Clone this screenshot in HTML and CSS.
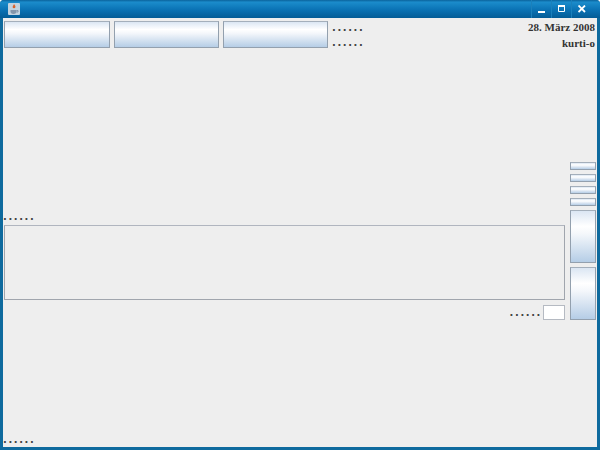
FILE: index.html
```html
<!DOCTYPE html>
<html lang="en">
<head>
    <meta charset="UTF-8">
    <title>Window</title>
    <link rel="stylesheet" href="styles.css">
</head>
<body>
    <div class="window">
        <div class="titlebar">
            <svg class="app-icon" width="12" height="12" viewBox="0 0 12 12">
                <rect width="12" height="12" rx="1" fill="#c3d3e0"/>
                <path d="M6 1c1 1.500 1.800 2 1.300 3.500C7 5.500 5 5.500 4.700 4.500 4.300 3.300 5.600 2.500 6 1z" fill="#d9622a"/>
                <path d="M2.500 7h6v1.500c0 1.500-1 2.500-3 2.500s-3-1-3-2.500z" fill="#8496ab"/>
                <path d="M8.500 7.500h1.500v1.500h-1.500" fill="none" stroke="#8496ab"/>
            </svg>
            <div class="controls">
                <div class="control">
                    <svg width="8" height="8" viewBox="0 0 8 8"><rect y="6" width="7" height="2" fill="#fff"/></svg>
                </div>
                <div class="control">
                    <svg width="8" height="8" viewBox="0 0 8 8"><path d="M.5.500h6v6h-6z" fill="none" stroke="#fff"/><rect width="7" height="2" fill="#fff"/></svg>
                </div>
                <div class="control">
                    <svg width="8" height="8" viewBox="0 0 8 8"><path d="M.5.500l6.500 6.500M7 .500l-6.500 6.500" stroke="#fff" stroke-width="1.800"/></svg>
                </div>
            </div>
        </div>

        <div class="content">
            <div class="top-row">
                <button class="btn btn-top btn-first"></button>
                <button class="btn btn-top"></button>
                <button class="btn btn-top"></button>
                <div class="top-labels">
                    <span class="dots">......</span>
                    <span class="dots">......</span>
                </div>
                <div class="info">
                    <span>28. März 2008</span>
                    <span>kurti-o</span>
                </div>
            </div>

            <div class="middle">
                <div class="main">
                    <span class="dots dots-left">......</span>
                    <div class="text-area"></div>
                    <div class="input-row">
                        <span class="dots">......</span>
                        <div class="field"></div>
                    </div>
                </div>
                <div class="side">
                    <button class="btn btn-small"></button>
                    <button class="btn btn-small"></button>
                    <button class="btn btn-small"></button>
                    <button class="btn btn-small"></button>
                    <button class="btn btn-tall"></button>
                    <button class="btn btn-tall"></button>
                </div>
            </div>

            <div class="status"><span class="dots dots-left">......</span></div>
        </div>
    </div>
</body>
</html>
```

FILE: styles.css
```css
html, body {
    margin: 0;
    padding: 0;
}

body {
    width: 600px;
    height: 450px;
    overflow: hidden;
    font-family: "DejaVu Sans", sans-serif;
    font-size: 10px;
    font-weight: bold;
    color: #444;
}

.window {
    width: 600px;
    height: 450px;
    box-sizing: border-box;
    display: flex;
    flex-direction: column;
    background: #0e6a9e;
    padding: 0 3px 3px 3px;
    border-radius: 4px 4px 0 0;
}

.titlebar {
    height: 18px;
    margin: 0 -3px;
    padding: 0 9px 0 8px;
    display: flex;
    align-items: center;
    justify-content: space-between;
    background: linear-gradient(#0b639c, #1b8ccb 12%, #0a72b4 55%, #045c96);
    border-radius: 4px 4px 0 0;
}

.app-icon {
    display: block;
}

.controls {
    display: flex;
    height: 18px;
}

.control {
    width: 20px;
    display: flex;
    align-items: center;
    justify-content: center;
    border-left: 1px solid #1b80bb;
    box-sizing: border-box;
}

.content {
    flex: 1;
    display: flex;
    flex-direction: column;
    background: #eeeeee;
    padding: 3px 1px 0 1px;
    min-height: 0;
}

.top-row {
    display: flex;
    align-items: flex-start;
    gap: 4px;
}

.btn {
    display: block;
    padding: 0;
    box-sizing: border-box;
    border: 1px solid #93a0ae;
    border-top-color: #a4afbb;
    background: linear-gradient(#dbe6f3, #ffffff 30%, #f4f7fb 45%, #b5cde6);
}

.btn-top {
    width: 105px;
    height: 27px;
}

.btn-first {
    width: 106px;
}

.top-labels {
    display: flex;
    flex-direction: column;
    gap: 1px;
}

.dots {
    display: block;
    line-height: 14px;
    letter-spacing: 1.6px;
}

.dots-left {
    margin-left: -1px;
}

.info {
    margin-left: auto;
    margin-right: 1px;
    display: flex;
    flex-direction: column;
    align-items: flex-end;
    gap: 3px;
    font-family: "Liberation Serif", serif;
    font-size: 11px;
    line-height: 13px;
    color: #333;
}

.middle {
    display: flex;
    gap: 5px;
    margin-top: 112px;
}

.main {
    flex: 1;
    display: flex;
    flex-direction: column;
    justify-content: flex-end;
}

.text-area {
    height: 75px;
    box-sizing: border-box;
    margin-top: 1px;
    border: 1px solid #a0a5ad;
    border-top-color: #b0b5bf;
}

.input-row {
    display: flex;
    justify-content: flex-end;
    align-items: center;
    gap: 1px;
    margin-top: 5px;
}

.field {
    width: 22px;
    height: 15px;
    box-sizing: border-box;
    background: #fff;
    border: 1px solid #b5bac2;
}

.side {
    width: 26px;
    display: flex;
    flex-direction: column;
    gap: 4px;
}

.btn-small {
    height: 8px;
}

.btn-tall {
    height: 53px;
}

.status {
    margin-top: auto;
}
```
